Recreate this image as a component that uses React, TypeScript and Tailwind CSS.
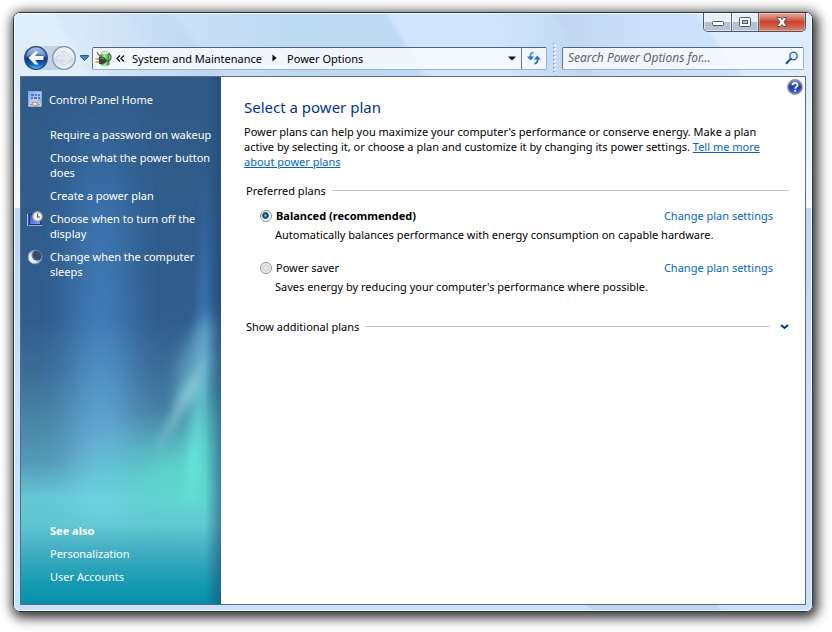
import React, { useState } from 'react';

const tasks = [
  { label: 'Require a password on wakeup' },
  { label: 'Choose what the power button does' },
  { label: 'Create a power plan' },
  { label: 'Choose when to turn off the display', icon: <DisplayIcon /> },
  { label: 'Change when the computer sleeps', icon: <MoonIcon /> },
];

const plans = [
  {
    id: 'balanced',
    name: 'Balanced (recommended)',
    description: 'Automatically balances performance with energy consumption on capable hardware.',
  },
  {
    id: 'saver',
    name: 'Power saver',
    description: "Saves energy by reducing your computer's performance where possible.",
  },
];

function HomeIcon() {
  return (
    <svg width="16" height="16" viewBox="0 0 16 16" aria-hidden="true">
      <defs>
        <linearGradient id="home" x1="0" y1="0" x2="1" y2="1">
          <stop offset="0" stopColor="#7d9df0" />
          <stop offset="0.5" stopColor="#b4ccfa" />
          <stop offset="1" stopColor="#7d9ee8" />
        </linearGradient>
      </defs>
      <rect x="1.5" y="0.5" width="13" height="15" fill="url(#home)" stroke="#8fa6d8" />
      <path d="M4 3h3v2H4zM8 3h2v2H8zM11 3h2v2h-2zM4 6h2v2H4zM7 6h3v2H7zM11 6h2v2h-2z" fill="#5474d0" />
      <path d="M2 15v-2.500c2-3 4-3.500 6-3.500s4.500 1 6 3.500V15z" fill="#c9ccd0" />
      <path d="M3 13.500h2.500M10.500 13.500H13M5 11l1 1M11 11l-1 1" stroke="#8a8b90" />
      <circle cx="8" cy="13" r="2" fill="#eceae4" stroke="#8b8a86" strokeWidth="0.800" />
      <circle cx="11.500" cy="13.500" r="0.900" fill="#d9b23c" />
    </svg>
  );
}

function DisplayIcon() {
  return (
    <svg width="16" height="16" viewBox="0 0 16 16" aria-hidden="true">
      <defs>
        <linearGradient id="screen" x1="0" y1="0" x2="1" y2="1">
          <stop offset="0" stopColor="#2f50d0" />
          <stop offset="1" stopColor="#8ba5ff" />
        </linearGradient>
      </defs>
      <path d="M0.500 3v12" stroke="#b9bfd0" />
      <rect x="2.500" y="3.500" width="11" height="10" fill="url(#screen)" stroke="#1c2f86" />
      <path d="M2 14.500h13" stroke="#a6adc4" />
      <circle cx="10.500" cy="5.500" r="4.900" fill="#f1f1ee" stroke="#8f8f8c" strokeWidth="1.200" />
      <path d="M10.500 2.500v3.500h2.500" stroke="#4f5560" fill="none" strokeWidth="1.100" />
    </svg>
  );
}

function MoonIcon() {
  return (
    <svg width="16" height="16" viewBox="0 0 16 16" aria-hidden="true">
      <defs>
        <radialGradient id="moon" cx="0.250" cy="0.650" r="0.700">
          <stop offset="0" stopColor="#ffffff" />
          <stop offset="0.600" stopColor="#cbdcf8" />
          <stop offset="1" stopColor="#6d8ed0" />
        </radialGradient>
      </defs>
      <circle cx="8" cy="8" r="7" fill="url(#moon)" />
      <circle cx="9.800" cy="6.600" r="5" fill="#3d4a60" />
      <path d="M6 2.500C3.500 6.500 6 11.500 12 12.500" stroke="#8ba3cc" fill="none" strokeWidth="0.800" />
      <circle cx="8" cy="8" r="7" fill="none" stroke="#6d8fc8" strokeWidth="0.800" />
    </svg>
  );
}

function PowerIcon() {
  return (
    <svg className="shrink-0" width="17" height="17" viewBox="0 0 17 17" aria-hidden="true">
      <defs>
        <linearGradient id="battery" x1="0" y1="0" x2="1" y2="0">
          <stop offset="0" stopColor="#2a9a28" />
          <stop offset="0.450" stopColor="#a6f598" />
          <stop offset="1" stopColor="#178a1a" />
        </linearGradient>
      </defs>
      <path d="M6 3.500C6 0.500 14 0.500 14 3.500V5H6z" fill="#e2e8e0" stroke="#8b918b" strokeWidth="0.600" />
      <path d="M5.500 4.500C7 3.500 13 3.500 14.500 4.500V14.500C13 16.500 7 16.500 5.500 14.500z" fill="url(#battery)" />
      <path d="M2 2c0.500 2.500 2 3 4 4.500" stroke="#555" strokeWidth="1.100" fill="none" />
      <path d="M11 11c4 0 5-1 5-3.500S14.500 3.500 13.500 4" stroke="#4a4a4a" strokeWidth="1.200" fill="none" />
      <path d="M0.500 9H4.500M0.500 12H4.500" stroke="#c79a1e" strokeWidth="1.500" />
      <path d="M4 7C7.500 6 11 7.500 11.500 10.500c-.5 3-3.500 4-7.500 3.500z" fill="#3f3f3f" />
      <path d="M5.500 8.500c1.500-.5 3 0 4 1" stroke="#9a9a9a" fill="none" />
    </svg>
  );
}

function GlassBackground() {
  return (
    <svg
      className="absolute inset-0 h-full w-full"
      viewBox="0 0 798 598"
      preserveAspectRatio="none"
      aria-hidden="true"
    >
      <defs>
        <linearGradient id="glassA" x1="0" y1="0" x2="1" y2="0">
          <stop offset="0" stopColor="#c3dbf3" stopOpacity="0" />
          <stop offset="1" stopColor="#bbd3ee" />
        </linearGradient>
        <linearGradient id="glassB" x1="0" y1="0" x2="1" y2="0">
          <stop offset="0" stopColor="#cbe2f8" />
          <stop offset="0.500" stopColor="#bddaf3" />
          <stop offset="1" stopColor="#c0daf4" />
        </linearGradient>
        <linearGradient id="glassC" x1="0" y1="0" x2="1" y2="0">
          <stop offset="0" stopColor="#bed4ef" />
          <stop offset="0.400" stopColor="#c9dff9" />
          <stop offset="1" stopColor="#cde3fc" />
        </linearGradient>
        <linearGradient id="sideFade" x1="0" y1="0" x2="0" y2="1">
          <stop offset="0" stopColor="#dcebfb" />
          <stop offset="1" stopColor="#f4f9fe" />
        </linearGradient>
        <linearGradient id="sideBand" x1="0" y1="0" x2="0" y2="1">
          <stop offset="0" stopColor="#bcd8f2" />
          <stop offset="1" stopColor="#c8e2fd" />
        </linearGradient>
        <filter id="streak">
          <feGaussianBlur stdDeviation="2" />
        </filter>
      </defs>
      <rect width="798" height="598" fill="#c8e2fd" />
      <rect width="798" height="64" fill="#d0e6fe" />
      <g filter="url(#streak)">
        <path d="M-10-10H34L82 74H-10z" fill="#e1effc" />
        <path d="M34-10H104L165 74H82z" fill="#d8e9fa" />
        <path d="M50-10H152L218 74H100z" fill="url(#glassA)" />
        <path d="M152-10H366L418 74H218z" fill="url(#glassB)" />
        <path d="M470-10H532L586 74H512z" fill="url(#glassA)" />
        <path d="M532-10H674L736 74H586z" fill="url(#glassC)" />
        <path d="M674-10H808V74H736z" fill="#dcecfd" />
      </g>
      <rect y="64" width="7" height="131" fill="url(#sideFade)" />
      <rect x="791" y="64" width="7" height="131" fill="url(#sideFade)" />
      <path d="M0 195h7v180H0zM791 195h7v180h-7z" fill="url(#sideBand)" />
      <path d="M570 590h130l8 8H580z" fill="#b9d5f0" />
    </svg>
  );
}

function SidebarBackground() {
  return (
    <svg
      className="absolute inset-0 h-full w-full"
      viewBox="0 0 200 527"
      preserveAspectRatio="none"
      aria-hidden="true"
    >
      <defs>
        <linearGradient id="base" x1="0" y1="0" x2="0" y2="1">
          <stop offset="0" stopColor="#305b88" />
          <stop offset="0.460" stopColor="#305d8d" />
          <stop offset="0.560" stopColor="#3c6d98" />
          <stop offset="0.660" stopColor="#4b87a8" />
          <stop offset="0.730" stopColor="#5499b8" />
          <stop offset="0.800" stopColor="#66c8d4" />
          <stop offset="0.850" stopColor="#5fc5d0" />
          <stop offset="0.900" stopColor="#42aec2" />
          <stop offset="0.960" stopColor="#169ab1" />
          <stop offset="1" stopColor="#0490ab" />
        </linearGradient>
        <linearGradient id="column" x1="0" y1="0" x2="0" y2="1">
          <stop offset="0" stopColor="#3f78b5" stopOpacity="0" />
          <stop offset="0.250" stopColor="#3f78b8" stopOpacity="0.750" />
          <stop offset="0.500" stopColor="#4480bc" stopOpacity="0.900" />
          <stop offset="0.800" stopColor="#6ab3dd" stopOpacity="0.900" />
          <stop offset="0.920" stopColor="#72d6e2" stopOpacity="0.800" />
          <stop offset="1" stopColor="#72d6e2" stopOpacity="0" />
        </linearGradient>
        <radialGradient id="teal">
          <stop offset="0" stopColor="#5ce0cc" stopOpacity="0.850" />
          <stop offset="0.300" stopColor="#5ce0cc" stopOpacity="0.650" />
          <stop offset="0.650" stopColor="#5cdccc" stopOpacity="0.250" />
          <stop offset="1" stopColor="#5cdccc" stopOpacity="0" />
        </radialGradient>
        <linearGradient id="beam" x1="0" y1="0" x2="0" y2="1">
          <stop offset="0" stopColor="#3f78c0" stopOpacity="0" />
          <stop offset="1" stopColor="#4580c0" />
        </linearGradient>
        <linearGradient id="ray" x1="0" y1="0" x2="0" y2="1">
          <stop offset="0" stopColor="#70dfe6" stopOpacity="0.300" />
          <stop offset="0.600" stopColor="#70f0e4" stopOpacity="0.600" />
          <stop offset="1" stopColor="#70f0e4" stopOpacity="0" />
        </linearGradient>
        <linearGradient id="edge" x1="0" y1="0" x2="1" y2="0">
          <stop offset="0" stopColor="#1d4a78" stopOpacity="0" />
          <stop offset="1" stopColor="#1b4775" stopOpacity="0.550" />
        </linearGradient>
        <filter id="wide" x="-80%" y="-20%" width="260%" height="140%">
          <feGaussianBlur stdDeviation="17 8" />
        </filter>
        <filter id="soft" x="-80%" y="-60%" width="260%" height="220%">
          <feGaussianBlur stdDeviation="8" />
        </filter>
        <filter id="thin" x="-100%" y="-20%" width="300%" height="140%">
          <feGaussianBlur stdDeviation="4" />
        </filter>
      </defs>
      <rect width="200" height="527" fill="url(#base)" />
      <rect x="52" y="20" width="56" height="440" fill="url(#column)" filter="url(#wide)" />
      <ellipse cx="168" cy="398" rx="125" ry="68" fill="url(#teal)" />
      <ellipse cx="190" cy="350" rx="42" ry="80" fill="url(#teal)" opacity="0.700" />
      <path d="M182 90H192L190 290H174z" fill="url(#beam)" opacity="0.900" filter="url(#thin)" />
      <path d="M196 235L200 290L178 325L155 335L158 285L176 250z" fill="#7cc6d8" opacity="0.550" filter="url(#soft)" />
      <path d="M187 275L178 312L134 378L158 318z" fill="#a0dce2" opacity="0.500" filter="url(#thin)" />
      <path d="M186 290L180 370L174 440L162 430L172 325z" fill="url(#ray)" filter="url(#thin)" />
      <rect x="184" width="16" height="527" fill="url(#edge)" />
    </svg>
  );
}

function CaptionButtons() {
  return (
    <div className="flex h-[19px] divide-x divide-[#5b6473] overflow-hidden rounded-b-[5px] border border-t-0 border-[#4d5666]">
      <button
        aria-label="Minimize"
        className="flex w-7 items-center justify-center bg-linear-to-b from-[#e6eef7] from-50% to-[#b4c3d4] to-50% shadow-[inset_0_0_0_1px_rgba(255,255,255,0.5)]"
      >
        <svg width="14" height="14" viewBox="0 0 14 14">
          <rect x="1.500" y="6.500" width="11" height="4" rx="1" fill="#fff" stroke="#535666" />
        </svg>
      </button>
      <button
        aria-label="Maximize"
        className="flex w-[27px] items-center justify-center bg-linear-to-b from-[#e6eef7] from-50% to-[#b4c3d4] to-50% shadow-[inset_0_0_0_1px_rgba(255,255,255,0.5)]"
      >
        <svg width="14" height="14" viewBox="0 0 14 14">
          <rect x="1.500" y="2.500" width="11" height="9" rx="1" fill="#fff" stroke="#535666" />
          <rect x="4.500" y="5.500" width="5" height="3" fill="#b4c3d4" stroke="#535666" />
        </svg>
      </button>
      <button
        aria-label="Close"
        className="flex w-[46px] items-center justify-center bg-linear-to-b from-[#e8b0a5] via-[#c7412b] via-50% to-[#d9806c] shadow-[inset_0_0_0_1px_rgba(255,255,255,0.3)]"
      >
        <svg width="14" height="14" viewBox="0 0 14 14">
          <path
            d="M2 2.500h3.500L7 4.500l1.500-2H12L9 7l3 4.500H8.500L7 9.500l-1.500 2H2L5 7z"
            fill="#fff"
            stroke="#535666"
            strokeLinejoin="round"
          />
        </svg>
      </button>
    </div>
  );
}

function NavButtons() {
  return (
    <div className="flex items-center gap-1 rounded-full bg-[#a9bfd6]/60">
      <button aria-label="Back">
        <svg width="24" height="24" viewBox="0 0 24 24">
          <defs>
            <linearGradient id="back" x1="0" y1="0" x2="0" y2="1">
              <stop offset="0" stopColor="#8fb4e6" />
              <stop offset="0.450" stopColor="#2f62bd" />
              <stop offset="0.500" stopColor="#0a2f8c" />
              <stop offset="0.800" stopColor="#1464c8" />
              <stop offset="1" stopColor="#4fd6f8" />
            </linearGradient>
          </defs>
          <circle cx="12" cy="12" r="11.300" fill="url(#back)" stroke="#2c4576" strokeWidth="1.200" />
          <path d="M3 10C4 4.500 8 2 12 2s8 2.500 9 8c-5-2-13-2-18 0z" fill="#fff" opacity="0.250" />
          <path d="M4.500 12l6.500-6.500h3.500L11 10h8.500v4H11l3.500 4.500H11z" fill="#fff" />
        </svg>
      </button>
      <button aria-label="Forward">
        <svg width="24" height="24" viewBox="0 0 24 24">
          <defs>
            <linearGradient id="forward" x1="0" y1="0" x2="0" y2="1">
              <stop offset="0" stopColor="#eef4fa" />
              <stop offset="0.450" stopColor="#e2eaf2" />
              <stop offset="0.550" stopColor="#cfdae5" />
              <stop offset="1" stopColor="#f0f6fb" />
            </linearGradient>
          </defs>
          <circle cx="12" cy="12" r="11.300" fill="url(#forward)" stroke="#8492a5" strokeWidth="1.200" />
          <path
            d="M19.500 12L13 5.500H9.500L13 10H4.500v4H13l-3.500 4.500H13z"
            fill="#e3eaf1"
            stroke="#c3ced9"
            strokeWidth="0.600"
          />
        </svg>
      </button>
    </div>
  );
}

function AddressBar() {
  return (
    <div className="flex h-[23px] min-w-0 flex-1 items-stretch rounded-[2px] border border-[#a3b0bf] border-t-[#59636f] border-l-[#6b7683] bg-white/75">
      <div className="flex min-w-0 flex-1 items-center pl-0.5">
        <PowerIcon />
        <button aria-label="Previous locations" className="flex w-4 justify-center">
          <svg width="9" height="7" viewBox="0 0 9 7">
            <path d="M4 0.500l-3 3 3 3M8 0.500l-3 3 3 3" fill="none" stroke="#111" strokeWidth="1.300" />
          </svg>
        </button>
        <button className="ml-1 truncate">System and Maintenance</button>
        <svg className="mx-2.5 shrink-0" width="5" height="8" viewBox="0 0 5 8" aria-hidden="true">
          <path d="M0.500 0.500L4.500 4l-4 3.500z" fill="#000" />
        </svg>
        <button className="truncate">Power Options</button>
        <button aria-label="Show address history" className="ml-auto flex w-[18px] shrink-0 justify-center">
          <svg width="8" height="5" viewBox="0 0 8 5">
            <path d="M0 0.500h8L4 4.500z" fill="#0a0a50" />
          </svg>
        </button>
      </div>
      <button aria-label="Refresh" className="flex w-[25px] items-center justify-center border-l border-[#6b7683]">
        <svg width="14" height="14" viewBox="0 0 14 14">
          <path d="M6.500 1.500C4 1.500 3.300 3.500 3.500 6" fill="none" stroke="#35a3d6" strokeWidth="1.800" />
          <path d="M0 5.500h7.200L3.700 9.500z" fill="#2a74c0" />
          <path d="M7.500 12.500c2.500 0 3.200-2 3-4.500" fill="none" stroke="#2a6cba" strokeWidth="1.800" />
          <path d="M6.800 8.500H14L10.300 4.500z" fill="#2a74c0" />
        </svg>
      </button>
    </div>
  );
}

function Toolbar() {
  return (
    <div className="flex items-center pt-3.5 pr-0.5 pb-1.5 pl-1">
      <NavButtons />
      <button aria-label="Recent pages" className="flex w-4 justify-center">
        <svg width="9" height="6" viewBox="0 0 9 6">
          <path d="M0.500 0.500h8v1L4.500 5.500l-4-4z" fill="#3f86c8" stroke="#17407c" strokeWidth="0.800" />
        </svg>
      </button>
      <AddressBar />
      <svg className="-my-1 mx-1.5 shrink-0" width="3" height="30" viewBox="0 0 3 30" aria-hidden="true">
        <path d="M1 0v30" stroke="#a3b4c8" strokeWidth="2" strokeDasharray="2 2" />
        <path d="M2 1v29" stroke="#fff" strokeWidth="2" strokeDasharray="2 2" opacity="0.800" />
      </svg>
      <div className="flex h-[23px] w-[242px] items-center rounded-[2px] border border-[#a3b0bf] border-t-[#59636f] border-l-[#6b7683] bg-white/75 pr-1 pl-[5px]">
        <input
          type="search"
          aria-label="Search"
          placeholder="Search Power Options for..."
          className="min-w-0 flex-1 bg-transparent text-xs italic outline-none placeholder:text-[#5f6368]"
        />
        <button aria-label="Start search">
          <svg width="14" height="14" viewBox="0 0 14 14">
            <circle cx="8.500" cy="5" r="3.700" fill="#e9f4ff" stroke="#2f74c8" strokeWidth="1.500" />
            <path d="M5.800 7.800L1.500 12.200" stroke="#1c4fa0" strokeWidth="2" strokeLinecap="round" />
          </svg>
        </button>
      </div>
    </div>
  );
}

function Sidebar() {
  return (
    <aside className="relative w-[200px] shrink-0 text-white">
      <SidebarBackground />
      <nav className="relative flex h-full flex-col pt-3.5 pb-5 pl-1.5">
        <a href="#home" className="flex items-center gap-1.5">
          <HomeIcon />
          Control Panel Home
        </a>
        <ul className="mt-5 flex flex-col gap-2">
          {tasks.map((task) => (
            <li key={task.label} className="flex gap-[7px]">
              <span className="w-4 shrink-0">{task.icon}</span>
              <a href="#task">{task.label}</a>
            </li>
          ))}
        </ul>
        <div className="mt-auto flex flex-col gap-2 pl-[23px]">
          <h2 className="font-bold">See also</h2>
          <a href="#personalization">Personalization</a>
          <a href="#accounts">User Accounts</a>
        </div>
      </nav>
    </aside>
  );
}

const App: React.FC = () => {
  const [plan, setPlan] = useState('balanced');

  return (
    <div className="flex min-h-screen bg-white pt-3 pr-[19px] pb-5 pl-[13px] font-['Noto_Sans',sans-serif] text-[11px] leading-[15px] text-black">
      <div className="relative flex flex-1 flex-col overflow-hidden rounded-[7px] border border-[#30383f] shadow-[2px_3px_12px_3px_rgba(0,0,0,0.8)]">
        <GlassBackground />
        <div className="relative flex flex-1 flex-col rounded-[6px] border border-white/70 px-[5px] pb-[5px]">
          <div className="-mt-px flex justify-end">
            <CaptionButtons />
          </div>
          <Toolbar />
          <div className="flex flex-1 border border-[#5d6b79] bg-white">
            <Sidebar />
            <main className="relative flex-1 pt-5 pr-4 pl-[23px]">
              <button aria-label="Help" className="absolute top-0.5 right-0.5">
                <svg width="16" height="16" viewBox="0 0 16 16">
                  <defs>
                    <linearGradient id="help" x1="0" y1="0" x2="0" y2="1">
                      <stop offset="0" stopColor="#6f8ee0" />
                      <stop offset="0.500" stopColor="#1c3fb4" />
                      <stop offset="1" stopColor="#3f6be0" />
                    </linearGradient>
                  </defs>
                  <circle cx="8" cy="8" r="7.200" fill="url(#help)" stroke="#8c8f96" strokeWidth="1.500" />
                  <path
                    d="M5.600 6.200C5.600 3.200 10.500 3.200 10.500 6 10.500 7.800 8.200 7.800 8.200 9.700"
                    fill="none"
                    stroke="#fff"
                    strokeWidth="1.700"
                  />
                  <circle cx="8.200" cy="11.800" r="1.100" fill="#fff" />
                </svg>
              </button>

              <h1 className="text-[15px] leading-5 text-[#003399]">Select a power plan</h1>
              <p className="mt-[7px]">
                Power plans can help you maximize your computer's performance or conserve energy. Make a plan active by
                selecting it, or choose a plan and customize it by changing its power settings.{' '}
                <a href="#more" className="text-[#0066cc] underline">
                  Tell me more about power plans
                </a>
              </p>

              <section aria-labelledby="preferred" className="mt-3.5 pl-0.5">
                <div className="flex items-center gap-1.5">
                  <h2 id="preferred">Preferred plans</h2>
                  <span className="h-px flex-1 bg-[#c8c8c8]" />
                </div>
                <div className="mt-2.5 flex flex-col gap-[18px] pr-4 pl-3.5">
                  {plans.map((p) => (
                    <div key={p.id}>
                      <div className="flex items-center">
                        <input
                          type="radio"
                          id={p.id}
                          name="plan"
                          checked={plan === p.id}
                          onChange={() => setPlan(p.id)}
                          className="size-3 shrink-0 appearance-none rounded-full border border-[#8e8f8f] bg-[radial-gradient(circle,#e8e8e8_20%,#c8cbce_45%,#f6f6f6_60%)] checked:bg-[radial-gradient(circle_at_45%_45%,#8fd8f8_0%,#1f78b0_18%,#0d2f50_36%,#d4dade_46%,#f6f6f6_60%)]"
                        />
                        <label htmlFor={p.id} className={plan === p.id ? 'ml-1 font-bold' : 'ml-1'}>
                          {p.name}
                        </label>
                        <a href="#settings" className="ml-auto text-[#0066cc]">
                          Change plan settings
                        </a>
                      </div>
                      <p className="mt-1 pl-[15px]">{p.description}</p>
                    </div>
                  ))}
                </div>
              </section>

              <button className="mt-[25px] flex w-full items-center gap-1.5 pl-0.5 text-left">
                <span>Show additional plans</span>
                <span className="h-px flex-1 bg-[#c8c8c8]" />
                <svg className="ml-1" width="9" height="6" viewBox="0 0 9 6" aria-hidden="true">
                  <path d="M1 1l3.500 3L8 1" fill="none" stroke="#003399" strokeWidth="2" />
                </svg>
              </button>
            </main>
          </div>
        </div>
      </div>
    </div>
  );
};

export default App;
